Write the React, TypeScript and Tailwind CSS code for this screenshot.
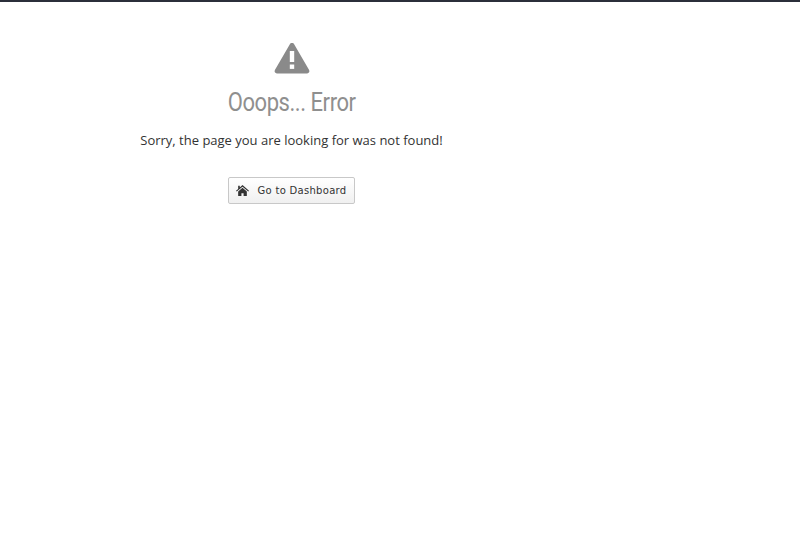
export default function App() {
  return (
    <div className="min-h-screen bg-white">
      <div className="h-[2px] bg-[#2b2f3a]" />
      <div className="w-[583px] flex flex-col items-center pt-[40px]">
        <svg viewBox="0 0 36 32" className="w-[36px] h-[32px]" fill="#8a8a8a">
          <path d="M18 1c1 0 1.8.5 2.3 1.4l14.8 25.7c.9 1.6-.2 3.4-2 3.4H2.9c-1.8 0-2.9-1.8-2-3.4L15.7 2.4C16.2 1.5 17 1 18 1z" />
          <rect x="15.8" y="9" width="4.4" height="11" fill="#fff" />
          <rect x="15.8" y="22.5" width="4.4" height="4.4" fill="#fff" />
        </svg>
        <h1
          className="mt-[14px] text-[25px] leading-[30px] text-[#8f8f8f] tracking-[-0.5px] scale-x-[0.88]"
          style={{ fontFamily: "Roboto, sans-serif" }}
        >
          Ooops... Error
        </h1>
        <p
          className="mt-[13px] text-[13px] text-[#333]"
          style={{ fontFamily: "'Open Sans', sans-serif" }}
        >
          Sorry, the page you are looking for was not found!
        </p>
        <button
          className="mt-[26px] h-[27px] px-[7px] flex items-center gap-[8px] rounded-[2px] border border-[#c8c8c8] bg-gradient-to-b from-white to-[#f0f0f0] text-[10px] text-[#333] tracking-[0.3px]"
          style={{ fontFamily: "'DejaVu Sans', sans-serif" }}
        >
          <svg viewBox="0 0 24 20" className="w-[13px] h-[11px]" fill="#333">
            <path d="M12 0l12 10.5-1.4 1.5L12 3 1.4 12 0 10.5 4 7V1h3v3.4z" />
            <path d="M12 5l8 7v8h-6v-5h-4v5H4v-8z" />
          </svg>
          Go to Dashboard
        </button>
      </div>
    </div>
  );
}
